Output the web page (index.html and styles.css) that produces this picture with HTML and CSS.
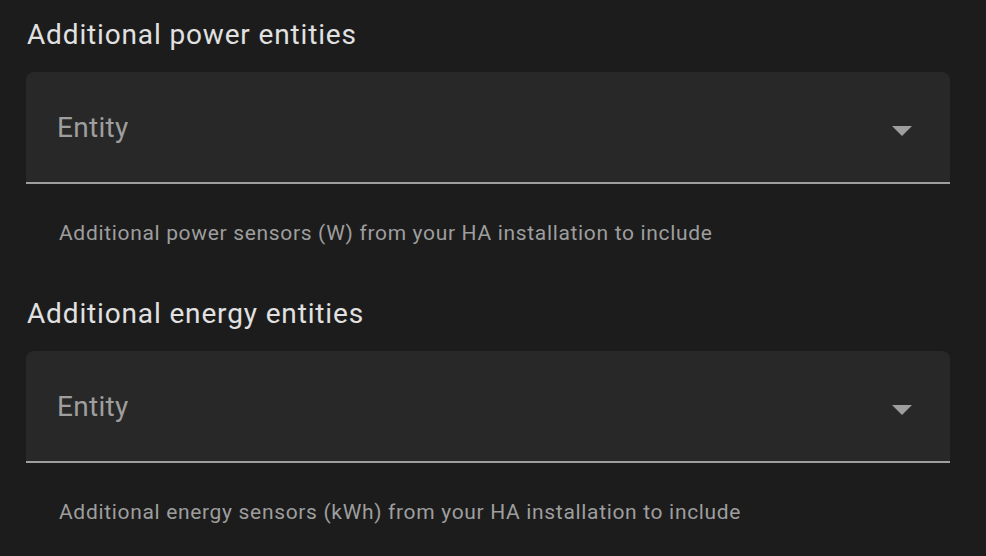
FILE: index.html
```html
<!DOCTYPE html>
<html>
<head>
<meta charset="utf-8">
<link rel="stylesheet" href="styles.css">
</head>
<body>
<div class="form">
  <section class="group">
    <h2 class="title">Additional power entities</h2>
    <div class="field">
      <span class="label">Entity</span>
      <svg class="arrow" width="20" height="10" viewBox="0 0 20 10"><path d="M0 0H20L10 10Z" fill="#9e9e9e"/></svg>
    </div>
    <p class="helper">Additional power sensors (W) from your HA installation to include</p>
  </section>
  <section class="group">
    <h2 class="title">Additional energy entities</h2>
    <div class="field">
      <span class="label">Entity</span>
      <svg class="arrow" width="20" height="10" viewBox="0 0 20 10"><path d="M0 0H20L10 10Z" fill="#9e9e9e"/></svg>
    </div>
    <p class="helper">Additional energy sensors (kWh) from your HA installation to include</p>
  </section>
</div>
</body>
</html>
```
FILE: styles.css
```css
html, body {
  margin: 0;
  padding: 0;
  background: #1c1c1c;
}
body {
  font-family: Roboto, "Noto Sans", sans-serif;
  width: 986px;
  height: 556px;
  overflow: hidden;
}
.form {
  padding: 15px 0 0 26px;
  width: 924px;
  display: flex;
  flex-direction: column;
  gap: 46px;
}
.group {
  display: flex;
  flex-direction: column;
}
.title {
  margin: 0 0 0 1px;
  font-size: 28px;
  font-weight: 400;
  line-height: 40px;
  color: #e1e1e1;
  letter-spacing: 0.85px;
}
.field {
  margin-top: 17px;
  height: 110px;
  background: #282828;
  border-radius: 8px 8px 0 0;
  border-bottom: 2px solid #9e9e9e;
  display: flex;
  justify-content: space-between;
  align-items: flex-start;
  padding: 0 38px 0 31px;
}
.label {
  margin-top: 36px;
  font-size: 28px;
  line-height: 40px;
  color: #9e9e9e;
  letter-spacing: 0.3px;
}
.arrow {
  margin-top: 54px;
  display: block;
}
.helper {
  margin: 34px 0 0 33px;
  font-size: 21px;
  line-height: 30px;
  color: #9e9e9e;
  letter-spacing: 0.67px;
}
```
